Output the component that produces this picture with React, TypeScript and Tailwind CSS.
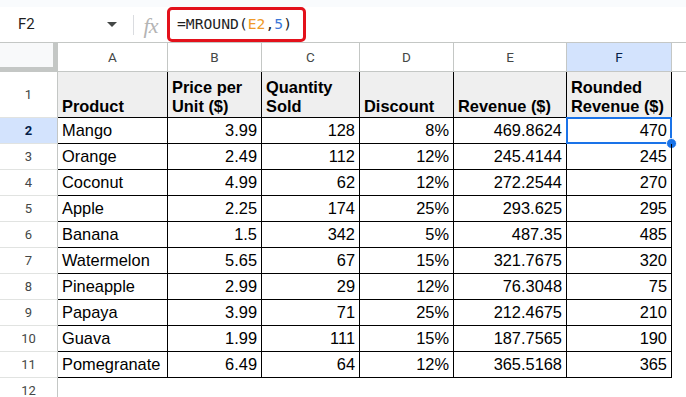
import React from "react";

const cols = [110, 94, 98, 94, 113, 105];
const letters = ["A", "B", "C", "D", "E", "F"];

const rows = [
    ["Mango", "3.99", "128", "8%", "469.8624", "470"],
    ["Orange", "2.49", "112", "12%", "245.4144", "245"],
    ["Coconut", "4.99", "62", "12%", "272.2544", "270"],
    ["Apple", "2.25", "174", "25%", "293.625", "295"],
    ["Banana", "1.5", "342", "5%", "487.35", "485"],
    ["Watermelon", "5.65", "67", "15%", "321.7675", "320"],
    ["Pineapple", "2.99", "29", "12%", "76.3048", "75"],
    ["Papaya", "3.99", "71", "25%", "212.4675", "210"],
    ["Guava", "1.99", "111", "15%", "187.7565", "190"],
    ["Pomegranate", "6.49", "64", "12%", "365.5168", "365"],
];

const headings = ["Product", "Price per Unit ($)", "Quantity Sold", "Discount", "Revenue ($)", "Rounded Revenue ($)"];

const RowHead = ({ n, active = false }: { n: number; active?: boolean }) => (
    <div
        className={`w-[58px] shrink-0 flex items-center justify-center border-r border-b border-r-[#c4c7c5] border-b-[#e1e3e1] text-[13px] font-['Roboto',sans-serif] ${
            active ? "bg-[#d3e3fd] text-[#041e49] font-bold" : "bg-white text-[#444746]"
        }`}
    >
        {n}
    </div>
);

export default function App() {
    return (
        <div className="w-[686px] h-[397px] overflow-hidden bg-white font-['Liberation_Sans',Arial,sans-serif] text-black">
            {/* formula bar */}
            <div className="h-[7px] bg-[#f9fbfd]" />
            <div className="h-[36px] flex items-center border-b border-[#c4c7c5]">
                <div className="w-[133px] h-full flex items-center pl-[18px] pr-[16px] font-['Roboto',sans-serif] text-[15px] text-[#1f1f1f]">
                    <span className="flex-1">F2</span>
                    <svg width="10" height="5" viewBox="0 0 10 5">
                        <polygon points="0,0 10,0 5,5" fill="#444746" />
                    </svg>
                </div>
                <div className="w-px h-[20px] bg-[#dadce0]" />
                <div className="w-[33px] flex justify-center pt-[1px] font-['Liberation_Serif',serif] italic text-[22px] text-[#b4b4b4] tracking-[-1px]">
                    fx
                </div>
                <div className="h-[35px] w-[139px] -mt-[1px] border-[3px] border-[#e3111b] rounded-[5px] flex items-center pl-[7px] font-['DejaVu_Sans_Mono',monospace] text-[14.7px] text-[#1f1f1f]">
                    =MROUND(<span className="text-[#f09a28]">E2</span>,<span className="text-[#3c78d8]">5</span>)
                </div>
            </div>

            {/* column headers */}
            <div className="flex h-[29px]">
                <div className="w-[58px] shrink-0 bg-[#f8f9fa] border-r-[5px] border-b-[5px] border-[#c4c7c5]" />
                {letters.map((l, i) => (
                    <div
                        key={l}
                        style={{ width: cols[i] }}
                        className={`shrink-0 flex items-center justify-center border-r border-b border-[#c4c7c5] font-['Roboto',sans-serif] text-[13.5px] ${
                            l === "F" ? "bg-[#d3e3fd] text-[#041e49]" : "text-[#444746]"
                        }`}
                    >
                        {l}
                    </div>
                ))}
                <div className="flex-1 border-b border-[#c4c7c5]" />
            </div>

            {/* header row 1 */}
            <div className="flex h-[46px]">
                <RowHead n={1} />
                {headings.map((h, i) => (
                    <div
                        key={h}
                        style={{ width: cols[i] }}
                        className="shrink-0 flex items-end bg-[#efefef] border-r border-b border-black px-[4px] pb-[1px] text-[16.4px] leading-[19px] font-bold"
                    >
                        {h}
                    </div>
                ))}
            </div>

            {/* data */}
            {rows.map((r, ri) => (
                <div key={ri} className="flex h-[26px]">
                    <RowHead n={ri + 2} active={ri === 0} />
                    {r.map((v, ci) => (
                        <div
                            key={ci}
                            style={{ width: cols[ci] }}
                            className={`relative shrink-0 flex items-center border-r border-b border-black px-[4px] text-[16.4px] leading-[19px] ${
                                ci === 0 ? "justify-start" : "justify-end"
                            }`}
                        >
                            {v}
                            {ri === 0 && ci === 5 && (
                                <>
                                    <div className="absolute -left-px -top-px -right-px -bottom-px border-2 border-[#1a73e8]" />
                                    <div className="absolute -right-[6px] -bottom-[6px] w-[11px] h-[11px] rounded-full bg-[#1a73e8] border border-white" />
                                </>
                            )}
                        </div>
                    ))}
                </div>
            ))}

            <div className="flex h-[26px]">
                <RowHead n={12} />
            </div>
        </div>
    );
}
